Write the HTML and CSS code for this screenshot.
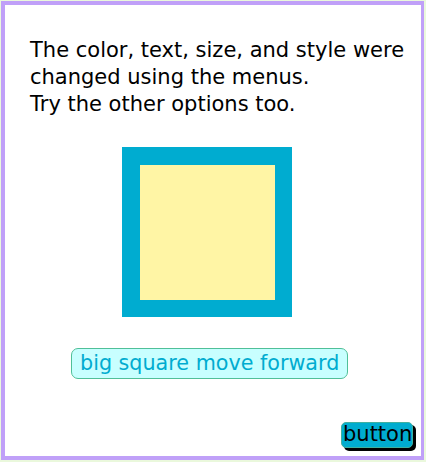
FILE: index.html
```html
<!DOCTYPE html>
<html>
<head>
<meta charset="utf-8">
<link rel="stylesheet" href="styles.css">
</head>
<body>
<div class="frame">
  <p class="intro">The color, text, size, and style were<br>changed using the menus.<br>Try the other options too.</p>
  <div class="square"><div class="square-inner"></div></div>
  <div class="pill">big square move forward</div>
  <div class="spacer"></div>
  <div class="actions"><span class="btn">button</span></div>
</div>
</body>
</html>
```
FILE: styles.css
```css
html, body {
  margin: 0;
  padding: 0;
}
body {
  background: #eaf8dc;
  width: 426px;
  height: 462px;
  overflow: hidden;
  font-family: "DejaVu Sans", sans-serif;
}
.frame {
  box-sizing: border-box;
  margin: 1px 0 0 1px;
  width: 423px;
  height: 459px;
  border: 4px solid #c0a0f8;
  border-right-width: 3px;
  background: #ffffff;
  display: flex;
  flex-direction: column;
}
.intro {
  margin: 32px 0 0 25px;
  font-size: 21px;
  line-height: 27px;
  color: #000;
}
.square {
  box-sizing: border-box;
  margin: 29px 0 0 117px;
  width: 170px;
  height: 170px;
  border: solid #00acd0;
  border-width: 18px 17px 17px 18px;
  background: #fff5a5;
}
.square-inner {
  width: 100%;
  height: 100%;
}
.pill {
  box-sizing: border-box;
  align-self: flex-start;
  margin: 31px 0 0 66px;
  width: 277px;
  height: 31px;
  padding-left: 8px;
  border: 1px solid #50c098;
  border-radius: 7px;
  background: #c8ffff;
  color: #00acd0;
  font-size: 20.7px;
  line-height: 28px;
  white-space: nowrap;
}
.spacer {
  flex: 1;
}
.actions {
  display: flex;
  justify-content: flex-end;
  padding: 0 8px 8px 0;
}
.btn {
  box-sizing: border-box;
  width: 72px;
  height: 26px;
  padding-left: 1px;
  background: #00acd0;
  border: 1px solid #40b0a0;
  border-radius: 5px;
  box-shadow: 3px 3px 0 #000;
  color: #000;
  font-size: 21px;
  line-height: 23px;
  white-space: nowrap;
}
```
